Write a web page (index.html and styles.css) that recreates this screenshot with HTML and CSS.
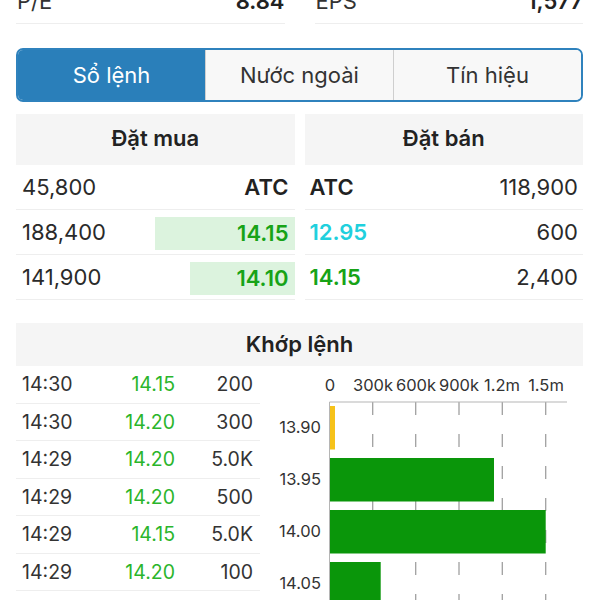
FILE: index.html
```html
<!DOCTYPE html>
<html lang="vi">
<head>
  <meta charset="UTF-8" />
  <meta name="viewport" content="width=device-width, initial-scale=1.0"/>
  <title>Sổ lệnh</title>
  <link rel="stylesheet" href="styles.css">
</head>
<body>
  <div class="page">
    <!-- Stats row (scrolled, partly hidden) -->
    <div class="stats">
      <div class="stat"><span>P/E</span><b>8.84</b></div>
      <div class="stat"><span>EPS</span><b>1,577</b></div>
    </div>

    <!-- Tabs -->
    <div class="tabs">
      <div class="tab active">Sổ lệnh</div>
      <div class="tab">Nước ngoài</div>
      <div class="tab">Tín hiệu</div>
    </div>

    <!-- Order book -->
    <div class="book">
      <div class="side buy">
        <div class="head">Đặt mua</div>
        <div class="row"><span class="qty">45,800</span><span class="price atc">ATC</span></div>
        <div class="row"><span class="qty">188,400</span><span class="price up bar" style="width: 140px">14.15</span></div>
        <div class="row"><span class="qty">141,900</span><span class="price up bar" style="width: 105px">14.10</span></div>
      </div>
      <div class="side sell">
        <div class="head">Đặt bán</div>
        <div class="row"><span class="price atc">ATC</span><span class="qty">118,900</span></div>
        <div class="row"><span class="price ceil">12.95</span><span class="qty">600</span></div>
        <div class="row"><span class="price up">14.15</span><span class="qty">2,400</span></div>
      </div>
    </div>

    <!-- Matched orders -->
    <div class="match">
      <div class="head">Khớp lệnh</div>
      <div class="match-body">
        <div class="trades">
          <div class="trade"><span>14:30</span><span class="tp">14.15</span><span class="tq">200</span></div>
          <div class="trade"><span>14:30</span><span class="tp">14.20</span><span class="tq">300</span></div>
          <div class="trade"><span>14:29</span><span class="tp">14.20</span><span class="tq">5.0K</span></div>
          <div class="trade"><span>14:29</span><span class="tp">14.20</span><span class="tq">500</span></div>
          <div class="trade"><span>14:29</span><span class="tp">14.15</span><span class="tq">5.0K</span></div>
          <div class="trade"><span>14:29</span><span class="tp">14.20</span><span class="tq">100</span></div>
        </div>

        <svg class="chart" width="313" height="235" viewBox="0 0 313 235">
          <g class="axis-labels">
            <text x="60" y="25">0</text>
            <text x="103" y="25">300k</text>
            <text x="146" y="25">600k</text>
            <text x="189" y="25">900k</text>
            <text x="232" y="25">1.2m</text>
            <text x="276" y="25">1.5m</text>
          </g>
          <g class="grid">
            <line x1="102.7" y1="36" x2="102.7" y2="235"/>
            <line x1="145.7" y1="36" x2="145.7" y2="235"/>
            <line x1="189" y1="36" x2="189" y2="235"/>
            <line x1="232.3" y1="36" x2="232.3" y2="235"/>
            <line x1="275.7" y1="36" x2="275.7" y2="235"/>
          </g>
          <line class="axis" x1="59.5" y1="36" x2="297" y2="36"/>
          <line class="axis" x1="59.5" y1="36" x2="59.5" y2="235"/>
          <rect class="bar-low" x="60" y="40" width="5" height="43.5"/>
          <rect class="bar" x="60" y="92" width="164" height="43.5"/>
          <rect class="bar" x="60" y="144" width="215.7" height="43.5"/>
          <rect class="bar" x="60" y="196" width="50.7" height="43.5"/>
          <g class="price-labels">
            <text x="51" y="67">13.90</text>
            <text x="51" y="119">13.95</text>
            <text x="51" y="171">14.00</text>
            <text x="51" y="223">14.05</text>
          </g>
        </svg>
      </div>
    </div>
  </div>
</body>
</html>
```

FILE: styles.css
```css
body {
  margin: 0;
  font-family: 'Inter', 'Roboto', sans-serif;
  background: #ffffff;
  color: #222;
  overflow: hidden;
}

.page {
  padding: 0 17px 0 16px;
}

.stats {
  display: grid;
  grid-template-columns: 1fr 1fr;
  column-gap: 30px;
  margin-top: -11px;
}

.stat {
  display: flex;
  justify-content: space-between;
  font-size: 22px;
  line-height: 24px;
  padding: 0 0 10px 1px;
  border-bottom: 1px solid #eeeeee;
}

.stat span {
  color: #333;
}

.stat b {
  font-weight: 600;
}

.tabs {
  display: flex;
  margin-top: 24px;
  height: 54px;
  border: 2px solid #2f82bd;
  border-radius: 7px;
  overflow: hidden;
  box-sizing: border-box;
}

.tab {
  flex: 1;
  display: flex;
  align-items: center;
  justify-content: center;
  background: #f8f8f8;
  color: #333;
  font-size: 22px;
  border-left: 1px solid #cfcfcf;
}

.tab:first-child {
  border-left: none;
}

.tab.active {
  background: #2a7fba;
  color: #fff;
}

.book {
  display: grid;
  grid-template-columns: 1fr 1fr;
  column-gap: 10px;
  margin-top: 12px;
}

.head {
  background: #f5f5f5;
  height: 51px;
  display: flex;
  align-items: center;
  justify-content: center;
  padding-bottom: 4px;
  box-sizing: border-box;
  font-weight: 600;
  font-size: 22px;
  color: #222;
}

.row {
  display: flex;
  justify-content: space-between;
  align-items: center;
  height: 45px;
  border-bottom: 1px solid #eeeeee;
  box-sizing: border-box;
  font-size: 22px;
}

.buy .row {
  padding-left: 6px;
}

.sell .row {
  padding: 0 5px;
}

.qty {
  color: #2a2a2a;
}

.price {
  font-weight: 600;
}

.buy .price {
  padding-right: 6px;
}

.price.bar {
  background: #dcf3de;
  height: 33px;
  margin-top: 2px;
  display: flex;
  align-items: center;
  justify-content: flex-end;
  box-sizing: border-box;
}

.atc {
  color: #222;
}

.up {
  color: #17a317;
}

.ceil {
  color: #20d0dd;
}

.match {
  margin-top: 23px;
}

.match .head {
  height: 43px;
  padding-bottom: 2px;
}

.match-body {
  display: flex;
}

.trades {
  width: 244px;
}

.trade {
  display: grid;
  grid-template-columns: 1fr 80px 78px;
  height: 37.5px;
  align-items: center;
  padding: 0 7px 0 6px;
  border-bottom: 1px solid #eeeeee;
  box-sizing: border-box;
  font-size: 19.5px;
  color: #333;
}

.tp,
.tq {
  text-align: right;
}

.tp {
  color: #2bb52b;
}

.chart {
  margin-left: 10px;
  display: block;
  font-family: 'Inter', 'Roboto', sans-serif;
}

.axis-labels text {
  font-size: 16.5px;
  fill: #333;
  text-anchor: middle;
}

.price-labels text {
  font-size: 16.5px;
  fill: #333;
  text-anchor: end;
}

.grid line {
  stroke: #a0a0a0;
  stroke-width: 1.3;
  stroke-dasharray: 13 19;
}

.axis {
  stroke: #b5b5b5;
  stroke-width: 1;
}

.bar {
  fill: #0a960a;
}

.bar-low {
  fill: #f6c21a;
}
```
